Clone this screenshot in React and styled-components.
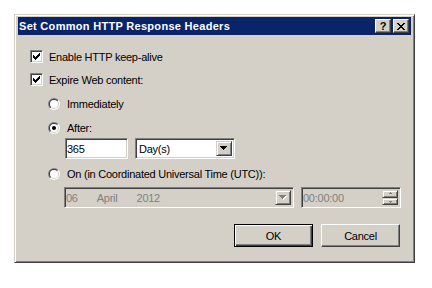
import styled, { createGlobalStyle } from "styled-components";

const GlobalStyle = createGlobalStyle`
  body {
    margin: 0;
    background: #ffffff;
    font-family: "Liberation Sans", Arial, sans-serif;
    font-size: 11px;
  }
`;

const Desktop = styled.div`
  padding: 14px 0 0 14px;
`;

const Window = styled.div`
  width: 401px;
  height: 249px;
  box-sizing: border-box;
  background: #d4d0c8;
  border: 1px solid;
  border-color: #d4d0c8 #404040 #404040 #d4d0c8;
  box-shadow: inset 1px 1px #ffffff, inset -1px -1px #808080;
  padding: 2px 3px 3px 3px;
  display: flex;
  flex-direction: column;
`;

const TitleBar = styled.div`
  height: 18px;
  background: #0a246a;
  display: flex;
  align-items: center;
  padding: 0 2px 0 1px;
  color: #ffffff;
  font-weight: bold;
  font-size: 11px;
  letter-spacing: 0.3px;
`;

const Caption = styled.span`
  flex: 1;
  white-space: nowrap;
`;

const CaptionButtons = styled.div`
  display: flex;
  gap: 2px;
`;

const CaptionButton = styled.div`
  width: 16px;
  height: 14px;
  box-sizing: border-box;
  background: #d4d0c8;
  border: 1px solid;
  border-color: #ffffff #404040 #404040 #ffffff;
  box-shadow: inset -1px -1px #808080;
  display: flex;
  align-items: center;
  justify-content: center;
  color: #000000;
  font-size: 11px;
  font-weight: bold;
  letter-spacing: 0;
  line-height: 1;
`;

const Content = styled.div`
  display: flex;
  flex-direction: column;
  color: #000000;
  letter-spacing: -0.25px;
`;

const Row = styled.div`
  display: flex;
  align-items: center;
  height: ${(p) => p.$h}px;
  margin-top: ${(p) => p.$top}px;
  padding-left: ${(p) => p.$indent || 0}px;
  gap: ${(p) => p.$gap || 0}px;
`;

const ButtonRow = styled.div`
  display: flex;
  justify-content: flex-end;
  gap: 8px;
  margin-top: 16px;
  padding-right: 11px;
`;

const Label = styled.span`
  white-space: nowrap;
  color: ${(p) => (p.$disabled ? "#808080" : "#000000")};
`;

const CheckBox = styled.span`
  width: 13px;
  height: 13px;
  box-sizing: border-box;
  background: #ffffff;
  border: 1px solid;
  border-color: #808080 #ffffff #ffffff #808080;
  box-shadow: inset 1px 1px #404040, inset -1px -1px #d4d0c8;
  display: flex;
  align-items: center;
  justify-content: center;
  flex: none;
`;

const Sunken = styled.div`
  width: ${(p) => p.$w}px;
  height: 100%;
  box-sizing: border-box;
  background: ${(p) => (p.$disabled ? "#d4d0c8" : "#ffffff")};
  border: 1px solid;
  border-color: #808080 #ffffff #ffffff #808080;
  box-shadow: inset 1px 1px #404040, inset -1px -1px #d4d0c8;
  padding: 2px 2px 2px 1px;
  display: flex;
  align-items: center;
  color: ${(p) => (p.$disabled ? "#808080" : "#000000")};
  flex: none;
`;

const FieldText = styled.span`
  flex: 1;
  padding-left: ${(p) => p.$pad || 0}px;
  white-space: nowrap;
  display: flex;
  gap: ${(p) => p.$gap || 0}px;
`;

const DropButton = styled.div`
  width: 16px;
  height: 100%;
  box-sizing: border-box;
  background: #d4d0c8;
  border: 1px solid;
  border-color: #d4d0c8 #404040 #404040 #d4d0c8;
  box-shadow: inset 1px 1px #ffffff, inset -1px -1px #808080;
  display: flex;
  align-items: center;
  justify-content: center;
`;

const Spinner = styled.div`
  width: 16px;
  height: 100%;
  display: flex;
  flex-direction: column;
`;

const SpinHalf = styled(DropButton)`
  height: 50%;
`;

const PushButton = styled.button`
  width: 79px;
  height: 23px;
  box-sizing: border-box;
  background: #d4d0c8;
  font-family: "Liberation Sans", Arial, sans-serif;
  font-size: 11px;
  letter-spacing: -0.25px;
  color: #000000;
  padding: 0;
  border: 1px solid;
  border-color: ${(p) =>
    p.$default ? "#000000" : "#ffffff #404040 #404040 #ffffff"};
  box-shadow: ${(p) =>
    p.$default
      ? "inset 1px 1px #ffffff, inset -1px -1px #404040, inset -2px -2px #808080"
      : "inset -1px -1px #808080"};
`;

function CheckMark() {
  return (
    <svg width="7" height="7" viewBox="0 0 7 7" shapeRendering="crispEdges">
      <rect x="6" y="0" width="1" height="1" fill="#000" />
      <rect x="5" y="1" width="2" height="1" fill="#000" />
      <rect x="0" y="2" width="1" height="1" fill="#000" />
      <rect x="4" y="2" width="3" height="1" fill="#000" />
      <rect x="0" y="3" width="2" height="1" fill="#000" />
      <rect x="3" y="3" width="3" height="1" fill="#000" />
      <rect x="0" y="4" width="5" height="1" fill="#000" />
      <rect x="1" y="5" width="3" height="1" fill="#000" />
      <rect x="2" y="6" width="1" height="1" fill="#000" />
    </svg>
  );
}

function Radio({ checked }) {
  return (
    <svg width="12" height="12" viewBox="0 0 12 12" style={{ flex: "none" }}>
      <defs>
        <linearGradient id="radioOuter" x1="0" y1="0" x2="1" y2="1">
          <stop offset="0.5" stopColor="#808080" />
          <stop offset="0.5" stopColor="#ffffff" />
        </linearGradient>
        <linearGradient id="radioInner" x1="0" y1="0" x2="1" y2="1">
          <stop offset="0.5" stopColor="#404040" />
          <stop offset="0.5" stopColor="#d4d0c8" />
        </linearGradient>
      </defs>
      <circle cx="6" cy="6" r="6" fill="url(#radioOuter)" />
      <circle cx="6" cy="6" r="5" fill="url(#radioInner)" />
      <circle cx="6" cy="6" r="4" fill="#ffffff" />
      {checked && <circle cx="6" cy="6" r="2" fill="#000000" />}
    </svg>
  );
}

function DownArrow({ disabled }) {
  const c = disabled ? "#808080" : "#000000";
  return (
    <svg width="8" height="5" viewBox="0 0 8 5" shapeRendering="crispEdges">
      {disabled && (
        <g fill="#ffffff">
          <rect x="1" y="1" width="7" height="1" />
          <rect x="2" y="2" width="5" height="1" />
          <rect x="3" y="3" width="3" height="1" />
          <rect x="4" y="4" width="1" height="1" />
        </g>
      )}
      <g fill={c}>
        <rect x="0" y="0" width="7" height="1" />
        <rect x="1" y="1" width="5" height="1" />
        <rect x="2" y="2" width="3" height="1" />
        <rect x="3" y="3" width="1" height="1" />
      </g>
    </svg>
  );
}

function SpinArrow({ up }) {
  return (
    <svg width="5" height="3" viewBox="0 0 5 3" shapeRendering="crispEdges">
      <g fill="#808080">
        {up ? (
          <>
            <rect x="2" y="0" width="1" height="1" />
            <rect x="1" y="1" width="3" height="1" />
          </>
        ) : (
          <>
            <rect x="1" y="1" width="3" height="1" />
            <rect x="2" y="2" width="1" height="1" />
          </>
        )}
      </g>
    </svg>
  );
}

function CloseGlyph() {
  return (
    <svg width="8" height="7" viewBox="0 0 8 7" shapeRendering="crispEdges">
      <g fill="#000">
        <rect x="0" y="0" width="2" height="1" />
        <rect x="6" y="0" width="2" height="1" />
        <rect x="1" y="1" width="2" height="1" />
        <rect x="5" y="1" width="2" height="1" />
        <rect x="2" y="2" width="4" height="1" />
        <rect x="3" y="3" width="2" height="1" />
        <rect x="2" y="4" width="4" height="1" />
        <rect x="1" y="5" width="2" height="1" />
        <rect x="5" y="5" width="2" height="1" />
        <rect x="0" y="6" width="2" height="1" />
        <rect x="6" y="6" width="2" height="1" />
      </g>
    </svg>
  );
}

export default function App() {
  return (
    <>
      <GlobalStyle />
      <Desktop>
        <Window>
          <TitleBar>
            <Caption>Set Common HTTP Response Headers</Caption>
            <CaptionButtons>
              <CaptionButton>?</CaptionButton>
              <CaptionButton>
                <CloseGlyph />
              </CaptionButton>
            </CaptionButtons>
          </TitleBar>
          <Content>
            <Row $h={13} $top={15} $indent={12} $gap={6}>
              <CheckBox>
                <CheckMark />
              </CheckBox>
              <Label>Enable HTTP keep-alive</Label>
            </Row>
            <Row $h={13} $top={10} $indent={12} $gap={6}>
              <CheckBox>
                <CheckMark />
              </CheckBox>
              <Label>Expire Web content:</Label>
            </Row>
            <Row $h={12} $top={12} $indent={30} $gap={7}>
              <Radio />
              <Label>Immediately</Label>
            </Row>
            <Row $h={12} $top={12} $indent={30} $gap={7}>
              <Radio checked />
              <Label>After:</Label>
            </Row>
            <Row $h={21} $top={4} $indent={47} $gap={7}>
              <Sunken $w={63}>
                <FieldText>365</FieldText>
              </Sunken>
              <Sunken $w={100}>
                <FieldText $pad={2}>Day(s)</FieldText>
                <DropButton>
                  <DownArrow />
                </DropButton>
              </Sunken>
            </Row>
            <Row $h={12} $top={9} $indent={30} $gap={7}>
              <Radio />
              <Label>On (in Coordinated Universal Time (UTC)):</Label>
            </Row>
            <Row $h={21} $top={7} $indent={46} $gap={7}>
              <Sunken $w={230} $disabled>
                <FieldText $gap={19}>
                  <span>06</span>
                  <span>April</span>
                  <span>2012</span>
                </FieldText>
                <DropButton>
                  <DownArrow disabled />
                </DropButton>
              </Sunken>
              <Sunken $w={100} $disabled>
                <FieldText>00:00:00</FieldText>
                <Spinner>
                  <SpinHalf>
                    <SpinArrow up />
                  </SpinHalf>
                  <SpinHalf>
                    <SpinArrow />
                  </SpinHalf>
                </Spinner>
              </Sunken>
            </Row>
            <ButtonRow>
              <PushButton $default>OK</PushButton>
              <PushButton>Cancel</PushButton>
            </ButtonRow>
          </Content>
        </Window>
      </Desktop>
    </>
  );
}
